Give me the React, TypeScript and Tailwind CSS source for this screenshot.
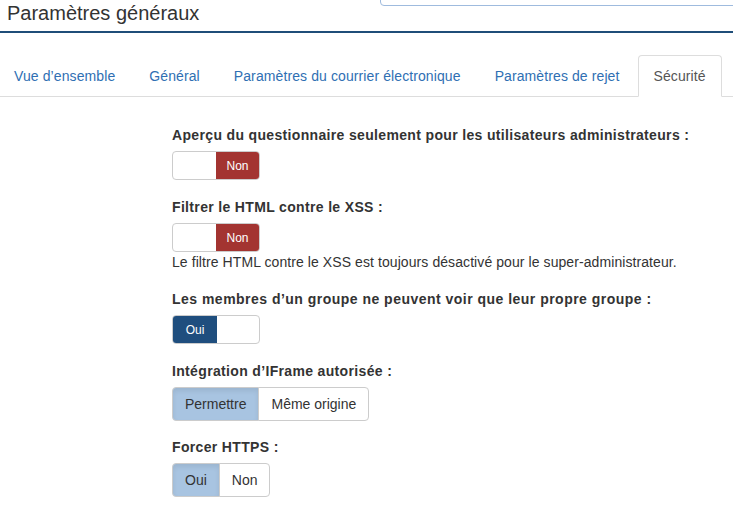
import React from 'react';

const tabs = [
  { label: 'Vue d’ensemble' },
  { label: 'Général' },
  { label: 'Paramètres du courrier électronique' },
  { label: 'Paramètres de rejet' },
  { label: 'Sécurité', active: true },
];

function Switch({ on, label }: { on: boolean; label: string }) {
  return (
    <div className="flex h-[29px] w-[88px] overflow-hidden rounded border border-[#ccc] bg-white text-[12px] text-white">
      {on ? (
        <>
          <div className="flex w-[44px] items-center justify-center bg-[#1f4e7e]">{label}</div>
          <div className="flex-1" />
        </>
      ) : (
        <>
          <div className="w-[43px]" />
          <div className="flex flex-1 items-center justify-center bg-[#a33431]">{label}</div>
        </>
      )}
    </div>
  );
}

function BtnGroup({ options, active }: { options: string[]; active: number }) {
  return (
    <div className="inline-flex h-[34px]">
      {options.map((o, i) => (
        <div
          key={o}
          className={`flex items-center border border-[#ccc] px-3 text-[14px] text-[#333] ${
            i === 0 ? 'rounded-l' : '-ml-px'
          } ${i === options.length - 1 ? 'rounded-r' : ''} ${
            i === active ? 'bg-[#a8c4e1] shadow-[inset_0_3px_5px_rgba(0,0,0,0.08)]' : 'bg-white'
          }`}
        >
          {o}
        </div>
      ))}
    </div>
  );
}

function Field({ label, wide, mb, children }: { label: string; wide?: boolean; mb?: string; children: React.ReactNode }) {
  return (
    <div className={mb ?? 'mb-[17px]'}>
      <div
        className={`mb-[6px] text-[14px] font-bold leading-5 text-[#333] ${
          wide ? 'tracking-[0.48px]' : 'tracking-[0.34px]'
        }`}
      >
        {label}
      </div>
      {children}
    </div>
  );
}

export default function App() {
  return (
    <div className="h-[507px] w-[733px] overflow-hidden bg-white" style={{ fontFamily: '"Liberation Sans", Arial, sans-serif' }}>
      <div className="flex h-[33px] items-start border-b-2 border-[#1f4e79]">
        <h1 className="pl-[7px] pt-[1px] text-[20px] leading-6 text-[#333]">Paramètres généraux</h1>
        <div className="ml-auto -mr-[20px] -mt-[25px] h-[31px] w-[373px] rounded border border-[#9fbbde]" />
      </div>

      <ul className="mt-[22px] -ml-[2px] flex border-b border-[#ddd] text-[14px] leading-5 tracking-[0.1px]">
        {tabs.map((t) => (
          <li key={t.label} className="-mb-px mr-[2px]">
            <div
              className={`rounded-t border px-[15px] py-[10px] ${
                t.active ? 'border-[#ddd] border-b-white bg-white text-[#555]' : 'border-transparent text-[#2f6fb3]'
              }`}
            >
              {t.label}
            </div>
          </li>
        ))}
      </ul>

      <div className="pl-[172px] pt-[28px]">
        <Field label="Aperçu du questionnaire seulement pour les utilisateurs administrateurs :">
          <Switch on={false} label="Non" />
        </Field>
        <div className="mb-[17px]">
          <div className="mb-[6px] text-[14px] font-bold leading-5 tracking-[0.34px] text-[#333]">
            Filtrer le HTML contre le XSS :
          </div>
          <Switch on={false} label="Non" />
          <p className="text-[14px] leading-5 tracking-[0.08px] text-[#333]">
            Le filtre HTML contre le XSS est toujours désactivé pour le super-administrateur.
          </p>
        </div>
        <Field wide label="Les membres d’un groupe ne peuvent voir que leur propre groupe :">
          <Switch on={true} label="Oui" />
        </Field>
        <Field label="Intégration d’IFrame autorisée :" mb="mb-[16px]">
          <BtnGroup options={['Permettre', 'Même origine']} active={0} />
        </Field>
        <Field label="Forcer HTTPS :">
          <BtnGroup options={['Oui', 'Non']} active={0} />
        </Field>
      </div>
    </div>
  );
}
